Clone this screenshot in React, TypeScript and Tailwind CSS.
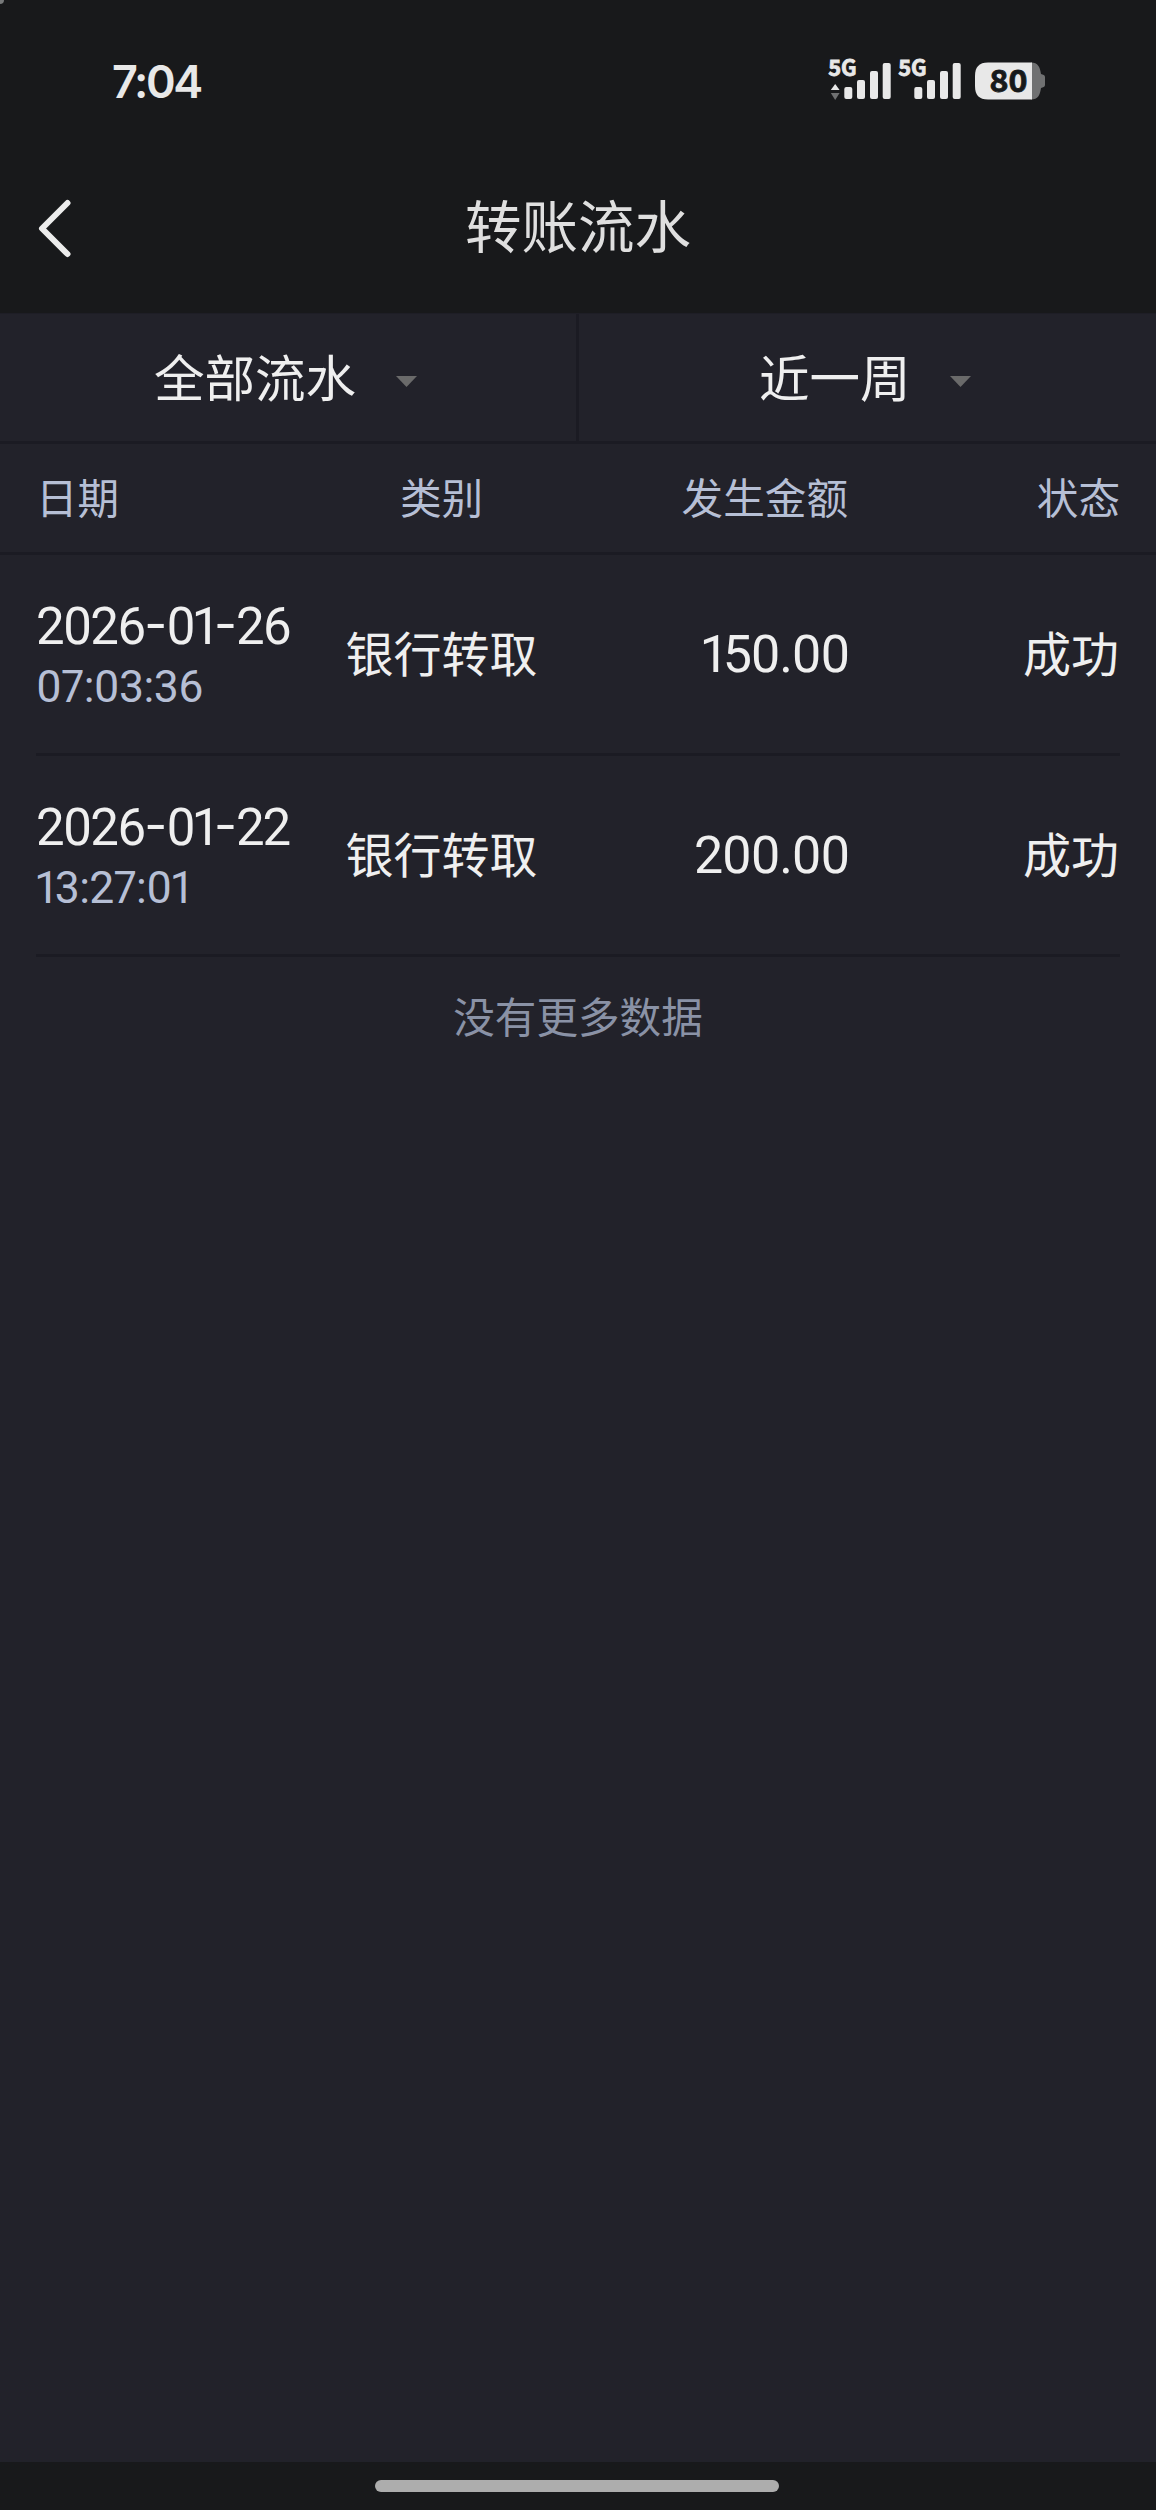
import { useState } from 'react'

const records = [
  {
    date: '2026-01-26',
    time: '07:03:36',
    type: '银行转取',
    amount: '150.00',
    status: '成功',
  },
  {
    date: '2026-01-22',
    time: '13:27:01',
    type: '银行转取',
    amount: '200.00',
    status: '成功',
  },
]

function Signal({ arrows = false }: { arrows?: boolean }) {
  return (
    <svg
      className="overflow-visible"
      width="64"
      height="46"
      viewBox="0 -4 64 46"
      fill="#e8e8e8"
    >
      <text
        x="-0.8"
        y="17.5"
        fontFamily="Noto Sans CJK SC, sans-serif"
        fontSize="22.5"
        fontWeight="700"
        stroke="#e8e8e8"
        strokeWidth="0.8"
        textLength="28.5"
        lengthAdjust="spacingAndGlyphs"
      >
        5G
      </text>
      {arrows && (
        <>
          <path d="M6.2 26 L10.6 32 H1.8 Z" />
          <path d="M1.8 35 H10.6 L6.2 42 Z" fill="#707172" />
        </>
      )}
      <rect x="15.3" y="29" width="8" height="12" rx="2" />
      <rect x="28" y="22" width="8" height="19" rx="2" />
      <rect x="41" y="13" width="8" height="28" rx="2" />
      <rect x="53.7" y="5" width="8" height="36" rx="2" />
    </svg>
  )
}

function Battery() {
  return (
    <svg
      className="overflow-visible"
      width="70"
      height="54"
      viewBox="0 -8 70 54"
    >
      <path
        d="M56 0.5 C63 0.5 65 5 66 12 C68 12.5 70 13 70 15 V23 C70 25 68 25.5 66 26 C65 33 63 37.5 56 37.5 Z"
        fill="#707172"
      />
      <path
        d="M57 0.5 H13 C4 0.5 0 5 0 14 V24 C0 33 4 37.5 13 37.5 H57 Z"
        fill="#e8e8e8"
      />
      <text
        x="14.5"
        y="30"
        fontFamily="Noto Sans CJK SC, sans-serif"
        fontSize="30.5"
        fontWeight="700"
        fill="#17191a"
        stroke="#17191a"
        strokeWidth="0.8"
        textLength="38"
        lengthAdjust="spacingAndGlyphs"
      >
        80
      </text>
    </svg>
  )
}

function Filter({ label, className }: { label: string; className: string }) {
  return (
    <button
      className={`flex h-[127px] items-center text-[50.5px] leading-[74px] text-[#efefef] ${className}`}
    >
      <span className="pb-[6px]">{label}</span>
      <svg className="mt-[7px]" width="21" height="11" viewBox="0 0 21 11">
        <path d="M0 0 H21 L10.5 11 Z" fill="#6a6a6a" />
      </svg>
    </button>
  )
}

function RecordDate({ value }: { value: string }) {
  const [year, month, day] = value.split('-')
  const dash = (
    <span className="font-[Inter,sans-serif] text-[50px] leading-none tracking-[-1px] [font-feature-settings:'case']">
      -
    </span>
  )

  return (
    <div className="text-[51px] leading-[60px] tracking-[-2px]">
      {year}
      {dash}
      {month}
      {dash}
      {day}
    </div>
  )
}

export default function App() {
  const [list] = useState(records)

  return (
    <div className="relative flex h-[2510px] w-[1156px] flex-col overflow-hidden bg-[#22222a] font-['Noto_Sans_CJK_SC',sans-serif]">
      <div className="absolute top-0 left-0 size-1 rounded-br-full bg-[#77797a]" />

      <div className="flex h-[164px] items-start justify-between bg-[#18191b] pt-[54px] pr-[111px] pl-[112px] text-[#e8e8e8]">
        <div className="font-[Inter,sans-serif] text-[45px] leading-[55px] font-semibold tracking-[-2.4px]">
          7:04
        </div>
        <div className="flex items-start">
          <Signal arrows />
          <div className="w-[6px]" />
          <Signal />
          <div className="w-[12px]" />
          <Battery />
        </div>
      </div>

      <div className="flex h-[149px] items-start bg-[#18191b]">
        <button className="w-[120px] pt-[34px] pl-[36px]">
          <svg
            width="38"
            height="60"
            viewBox="0 0 38 60"
            fill="none"
            stroke="#ececec"
            strokeWidth="6"
            strokeLinecap="round"
            strokeLinejoin="round"
          >
            <path d="M31.5 5 L6 30.5 L31.5 56" />
          </svg>
        </button>
        <h1 className="flex-1 pt-[17px] text-center text-[56.5px] leading-[84px] text-[#dfdfdf]">
          转账流水
        </h1>
        <div className="w-[120px]" />
      </div>

      <div className="flex border-t border-b-3 border-t-[#1e1e26] border-b-[#1b1b23]">
        <Filter
          label="全部流水"
          className="w-[579px] gap-[40px] border-r-3 border-[#1b1b23] pl-[154px]"
        />
        <Filter label="近一周" className="flex-1 gap-[39px] pl-[180px]" />
      </div>

      <div className="flex h-[111px] items-center border-b-3 border-[#1b1b23] px-[36px] pb-[5px] text-[41.6px] leading-[60px] text-[#b6bfd5]">
        <div className="w-[272px]">日期</div>
        <div className="w-[267px] text-center">类别</div>
        <div className="w-[273px] text-right">发生金额</div>
        <div className="flex-1 text-right">状态</div>
      </div>

      <div className="px-[36px]">
        {list.map((item) => (
          <div
            key={item.date}
            className="flex h-[201px] items-center border-b-3 border-[#1b1b23] text-[48px] leading-[70px] text-[#efefef]"
          >
            <div className="w-[272px] pt-[6px] font-[Roboto,sans-serif] whitespace-nowrap [font-variant-numeric:proportional-nums]">
              <RecordDate value={item.date} />
              <div className="text-[44.5px] leading-[60px] tracking-[-0.6px] text-[#b6bfd5]">
                {item.time}
              </div>
            </div>
            <div className="w-[267px] pb-[7px] text-center">{item.type}</div>
            <div className="w-[275px] pt-[2px] pr-[1px] text-right font-[Roboto,sans-serif] text-[52px] tracking-[-1.5px] [font-variant-numeric:proportional-nums]">
              {item.amount}
            </div>
            <div className="flex-1 pr-px pb-[7px] text-right">
              {item.status}
            </div>
          </div>
        ))}
      </div>

      <p className="pt-[28px] text-center text-[41.6px] leading-[60px] text-[#8a92a6]">
        没有更多数据
      </p>

      <div className="mt-auto flex h-[48px] items-center justify-center bg-[#18191b] pr-[2px]">
        <div className="h-[12px] w-[404px] rounded-full bg-[#adadad]" />
      </div>
    </div>
  )
}
